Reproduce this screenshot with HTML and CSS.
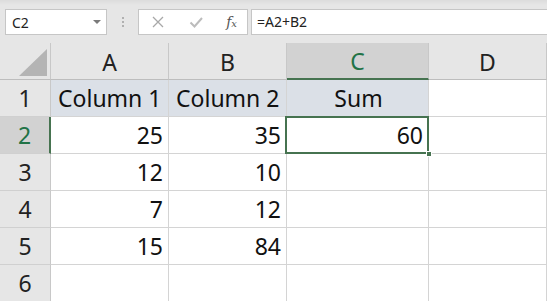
FILE: index.html
```html
<!DOCTYPE html>
<html>
<head>
    <meta charset="utf-8">
    <title>Sheet</title>
    <link rel="stylesheet" href="styles.css">
</head>
<body>
    <div class="formula-bar">
        <div class="name-box">
            <span>C2</span>
            <svg class="drop" width="8" height="4" viewBox="0 0 8 4"><path d="M0 0h8L4 4z" fill="#7a7a7a"/></svg>
        </div>
        <div class="grip"><i></i><i></i><i></i></div>
        <div class="fx-buttons">
            <svg width="14" height="14" viewBox="0 0 14 14"><path d="M2 2l10 10M12 2L2 12" stroke="#a8a8a8" stroke-width="1.3" fill="none"/></svg>
            <svg width="14" height="14" viewBox="0 0 14 14"><path d="M1.5 7.5l4 4L13 3" stroke="#bcbcbc" stroke-width="2" fill="none"/></svg>
            <span class="fx">f<sub>x</sub></span>
        </div>
        <div class="formula-input">=A2+B2</div>
    </div>

    <div class="sheet">
        <div class="corner">
            <svg width="28" height="27" viewBox="0 0 28 27"><path d="M28 0V27H0z" fill="#b4b4b4"/></svg>
        </div>
        <div class="col-head">A</div>
        <div class="col-head">B</div>
        <div class="col-head selected">C</div>
        <div class="col-head">D</div>

        <div class="row-head">1</div>
        <div class="cell title">Column 1</div>
        <div class="cell title">Column 2</div>
        <div class="cell title center">Sum</div>
        <div class="cell"></div>

        <div class="row-head selected">2</div>
        <div class="cell num">25</div>
        <div class="cell num">35</div>
        <div class="cell num active">60</div>
        <div class="cell"></div>

        <div class="row-head">3</div>
        <div class="cell num">12</div>
        <div class="cell num">10</div>
        <div class="cell"></div>
        <div class="cell"></div>

        <div class="row-head">4</div>
        <div class="cell num">7</div>
        <div class="cell num">12</div>
        <div class="cell"></div>
        <div class="cell"></div>

        <div class="row-head">5</div>
        <div class="cell num">15</div>
        <div class="cell num">84</div>
        <div class="cell"></div>
        <div class="cell"></div>

        <div class="row-head">6</div>
        <div class="cell"></div>
        <div class="cell"></div>
        <div class="cell"></div>
        <div class="cell"></div>
    </div>
</body>
</html>
```

FILE: styles.css
```css
body {
    margin: 0;
    padding: 0;
    width: 547px;
    height: 301px;
    overflow: hidden;
    background: #fff;
    font-family: 'Noto Sans', 'Open Sans', sans-serif;
}

.formula-bar {
    height: 43px;
    box-sizing: border-box;
    background: linear-gradient(#dcdcdc, #e6e6e6 5px, #e6e6e6);
    display: flex;
    align-items: flex-start;
    padding: 9px 0 0 5px;
}

.name-box {
    width: 102px;
    height: 26px;
    box-sizing: border-box;
    background: #fff;
    border: 1px solid #c6c6c6;
    display: flex;
    align-items: center;
    justify-content: space-between;
    padding: 0 5px 0 6px;
    font-size: 14px;
    color: #222;
}

.grip {
    width: 31px;
    height: 26px;
    display: flex;
    flex-direction: column;
    align-items: center;
    justify-content: center;
    gap: 2px;
}

.grip i {
    width: 2px;
    height: 2px;
    background: #b0b0b0;
}

.fx-buttons {
    width: 110px;
    height: 26px;
    box-sizing: border-box;
    background: #fff;
    border: 1px solid #c6c6c6;
    display: flex;
    align-items: center;
    justify-content: space-between;
    padding: 0 10px 0 12px;
}

.fx {
    font-family: 'DejaVu Serif', 'Liberation Serif', serif;
    font-style: italic;
    font-size: 14px;
    color: #555;
}

.fx sub {
    font-size: 10px;
    vertical-align: 0;
}

.formula-input {
    flex: 1;
    margin-left: 3px;
    height: 26px;
    box-sizing: border-box;
    background: #fff;
    border: 1px solid #c6c6c6;
    border-right: 0;
    padding-left: 5px;
    font-size: 14px;
    line-height: 24px;
    color: #222;
}

.sheet {
    display: grid;
    grid-template-columns: 51px 118px 118px 142px 1fr;
    grid-template-rows: repeat(7, 37px);
    font-size: 23px;
    color: #111;
}

.corner,
.col-head,
.row-head {
    background: #e6e6e6;
    border-right: 1px solid #c8c8c8;
    border-bottom: 1px solid #bdbdbd;
    box-sizing: border-box;
    display: flex;
    align-items: center;
    justify-content: center;
    color: #222;
}

.corner {
    align-items: flex-end;
    justify-content: flex-end;
    padding: 0 3px 3px 0;
}

.col-head {
    padding-top: 2px;
}

.col-head.selected {
    background: #d2d2d2;
    color: #217346;
    border-bottom: 2px solid #467350;
    padding-top: 0;
}

.row-head {
    border-bottom-color: #d0d0d0;
}

.row-head.selected {
    background: #d2d2d2;
    color: #217346;
    border-right: 2px solid #467350;
}

.cell {
    border-right: 1px solid #d4d4d4;
    border-bottom: 1px solid #d4d4d4;
    box-sizing: border-box;
    display: flex;
    align-items: center;
    padding: 0 5px 0 7px;
    white-space: nowrap;
    position: relative;
}

.cell.title {
    background: #dbe0e7;
}

.cell.center {
    justify-content: center;
}

.cell.num {
    justify-content: flex-end;
}

.cell.active::after {
    content: "";
    position: absolute;
    left: -2px;
    top: -1px;
    right: -1px;
    bottom: -1px;
    border: 2px solid #467350;
}

.cell.active::before {
    content: "";
    position: absolute;
    right: -4px;
    bottom: -4px;
    width: 6px;
    height: 6px;
    background: #467350;
    border: 1px solid #fff;
    box-sizing: border-box;
    z-index: 2;
}
```
